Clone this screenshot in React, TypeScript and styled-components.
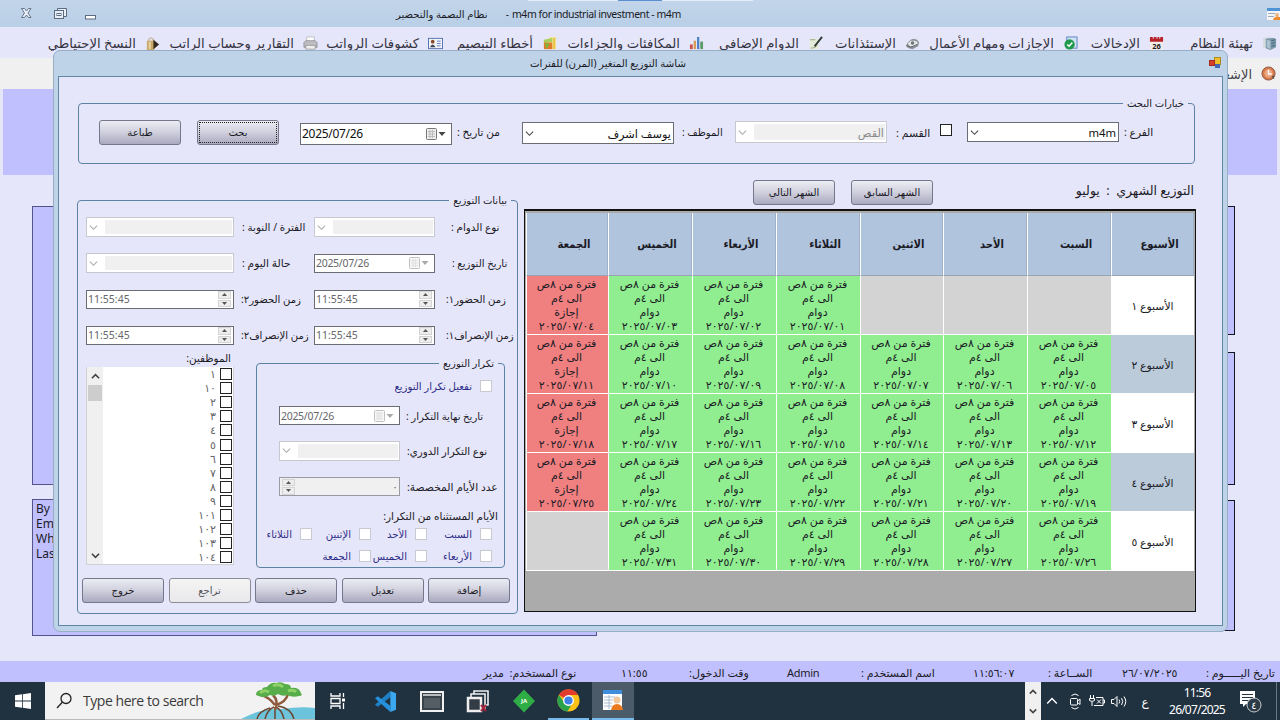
import React, { useState } from "react";
import styled, { createGlobalStyle } from "styled-components";

const GlobalStyle = createGlobalStyle`
  * {
    box-sizing: border-box;
  }
  body {
    margin: 0;
    overflow: hidden;
    font-family: "Noto Sans", "DejaVu Sans", sans-serif;
    color: #1b1b26;
  }
`;

const Desktop = styled.div`
  position: relative;
  width: 1280px;
  height: 720px;
  overflow: hidden;
  display: flex;
  flex-direction: column;
  background: #e6e6fa;
`;

const TitleBar = styled.header`
  height: 27px;
  flex: none;
  display: flex;
  align-items: center;
  background: linear-gradient(#c2d5ea, #b9cfe6);
  font-size: 10px;
`;

const WindowButtons = styled.div`
  width: 396px;
  padding-left: 20px;
  display: flex;
  align-items: center;
`;

const AppTitle = styled.div`
  width: 116px;
  display: flex;
  justify-content: space-between;
  padding-right: 3px;
  white-space: nowrap;
`;

const CompanyName = styled.div`
  flex: 1;
  font-size: 10.5px;
  letter-spacing: -0.45px;
  white-space: nowrap;
`;

const TopStrip = styled.div`
  position: absolute;
  top: 0;
  left: 528px;
  width: 225px;
  height: 1px;
  background: linear-gradient(
    90deg,
    #e4ecf5 0 90px,
    #5a90d0 90px 134px,
    #e4ecf5 134px
  );
`;

const MenuBar = styled.nav`
  height: 31px;
  flex: none;
  display: flex;
  direction: rtl;
  padding: 2px 3px 0 0;
  background: #e6e6fa;
`;

const MenuItem = styled.div<{ $width: number }>`
  width: ${(p) => p.$width}px;
  height: 28px;
  flex: none;
  display: flex;
  align-items: center;
  gap: 9px;
  font-size: 13.2px;
  color: #33333f;
  white-space: nowrap;
  svg {
    flex: none;
  }
`;

const ToolBar = styled.div`
  height: 31px;
  flex: none;
  display: flex;
  align-items: center;
  direction: rtl;
  gap: 9px;
  padding: 0 4px 0;
  font-size: 13px;
  color: #44444c;
  background: #f0f0f0;
`;

const Workspace = styled.main`
  flex: 1;
  padding: 0 3px;
`;

const Banner = styled.div`
  height: 86px;
  background: #c0c0ff;
`;

const Columns = styled.div`
  display: flex;
  justify-content: space-between;
  padding: 31px 42px 0 29px;
`;

const Column = styled.div`
  width: 565px;
  display: flex;
  flex-direction: column;
`;

const Panel = styled.div<{ $height: number; $gap?: number; $dark?: boolean }>`
  height: ${(p) => p.$height}px;
  margin-bottom: ${(p) => p.$gap || 0}px;
  padding: 1px 3px;
  border: 1px solid ${(p) => (p.$dark ? "#15151f" : "#54548a")};
  background: #c0c0ff;
  font-size: 12px;
  line-height: 15px;
`;

const StatusBar = styled.footer`
  height: 21px;
  flex: none;
  display: flex;
  align-items: center;
  padding: 2px 0 0 483px;
  background: #c0c0ff;
  white-space: nowrap;
`;

const StatusLabel = styled.div<{ $width: number }>`
  width: ${(p) => p.$width}px;
  flex: none;
  direction: rtl;
  text-align: left;
  font-size: 11px;
`;

const StatusValue = styled.div<{ $width: number; $spacing?: number }>`
  width: ${(p) => p.$width}px;
  flex: none;
  font-size: 11px;
  letter-spacing: ${(p) => p.$spacing || -0.3}px;
`;

/* ---------- dialog ---------- */

const Dialog = styled.section`
  position: absolute;
  left: 53px;
  top: 50px;
  width: 1175px;
  height: 582px;
  display: flex;
  flex-direction: column;
  padding: 0 4px 5px;
  border: 1px solid #98adc6;
  border-radius: 7px;
  background: #bed3e8;
`;

const DialogTitle = styled.div`
  height: 25px;
  flex: none;
  display: flex;
  align-items: center;
  justify-content: space-between;
  padding: 0 2px 1px 472px;
  font-size: 10.2px;
`;

const DialogBody = styled.div`
  flex: 1;
  padding: 20px 0 0 19px;
  border: 1px solid #5f87a6;
  background: #e6e6fa;
`;

const Group = styled.fieldset<{ $width: number; $height: number }>`
  width: ${(p) => p.$width}px;
  height: ${(p) => p.$height}px;
  min-width: 0;
  flex: none;
  margin: 0;
  padding: 0;
  border: 1px solid #5b83a3;
  border-radius: 4px;
  direction: rtl;
`;

const Legend = styled.legend`
  height: 13px;
  margin-right: 6px;
  padding: 0 4px;
  font-size: 10px;
  line-height: 13px;
`;

const SearchRow = styled.div`
  height: 44px;
  display: flex;
  align-items: center;
  padding-left: 20px;
  direction: ltr;
`;

const Button = styled.button<{ $focused?: boolean }>`
  width: 82px;
  height: 25px;
  flex: none;
  padding: 0 0 1px;
  border: 1px solid #77778c;
  border-radius: 3px;
  outline: ${(p) => (p.$focused ? "1px dotted #222" : "none")};
  outline-offset: -3px;
  background: linear-gradient(#ececf4, #d3d3e0 45%, #aaa9c0);
  font-family: inherit;
  font-size: 10px;
  color: #1b1b26;
  &:disabled {
    background: linear-gradient(#f4f4f4, #e9e9ec);
    border-color: #8c8c94;
    color: #55555c;
  }
`;

const Label = styled.span<{ $width?: number; $indent?: number; $size?: number }>`
  width: ${(p) => (p.$width ? `${p.$width}px` : "auto")};
  flex: none;
  padding-left: ${(p) => p.$indent || 0}px;
  direction: rtl;
  text-align: left;
  font-size: ${(p) => p.$size || 10.1}px;
  white-space: nowrap;
`;

const Gap = styled.span<{ $width: number }>`
  width: ${(p) => p.$width}px;
  flex: none;
`;

const Box = styled.div<{
  $width: number;
  $height?: number;
  $top?: number;
  $disabled?: boolean;
}>`
  width: ${(p) => p.$width}px;
  height: ${(p) => p.$height || 20}px;
  flex: none;
  margin-top: ${(p) => p.$top || 0}px;
  display: flex;
  align-items: center;
  border: 1px solid #6c6c74;
  background: #fff;
  font-size: ${(p) => (p.$disabled ? 10.5 : 12)}px;
  color: ${(p) => (p.$disabled ? "#66666c" : "#111")};
`;

const ComboBox = styled(Box)`
  padding: 1px;
  border-color: ${(p) => (p.$disabled ? "#c8c8d0" : "#6c6c74")};
  svg {
    flex: none;
    margin: 0 ${(p) => (p.$disabled ? 7 : 4)}px 0 1px;
  }
`;

const ComboValue = styled.div<{ $disabled?: boolean }>`
  flex: 1;
  margin: 1px 0;
  padding-right: 1px;
  display: flex;
  align-items: center;
  align-self: stretch;
  direction: rtl;
  background: ${(p) => (p.$disabled ? "#f0f0f0" : "#fff")};
  font-size: 11.3px;
  color: ${(p) => (p.$disabled ? "#8a8a8a" : "#111")};
`;

const BoxText = styled.span<{ $spacing?: number }>`
  flex: 1;
  padding-left: 1px;
  letter-spacing: ${(p) => p.$spacing || 0}px;
`;

const SpinButtons = styled.div`
  width: 13px;
  height: 16px;
  margin: 0 2px;
  display: flex;
  flex-direction: column;
  gap: 1px;
`;

const SpinButton = styled.div`
  flex: 1;
  display: flex;
  align-items: center;
  justify-content: center;
  border: 1px solid #d4d4d4;
  background: #ededed;
`;

const Check = styled.span<{ $disabled?: boolean; $raised?: boolean }>`
  width: 12px;
  height: 12px;
  flex: none;
  margin-bottom: ${(p) => (p.$raised ? 4 : 0)}px;
  border: 1px solid ${(p) => (p.$disabled ? "#c9c9d2" : "#222")};
  background: #fff;
`;

const Content = styled.div`
  display: flex;
  align-items: flex-start;
  gap: 6px;
  margin-left: -1px;
`;

const Distribution = styled.div`
  padding-top: 30px;
`;

const Fields = styled.div`
  display: grid;
  grid-template-columns: 148px 80px 121px 80px;
  grid-auto-rows: 36px;
  align-items: center;
  padding: 2px 0 1px 8px;
  direction: ltr;
`;

const Lower = styled.div`
  display: flex;
  justify-content: space-between;
  padding: 0 12px 0 8px;
  height: 219px;
  direction: ltr;
`;

const Employees = styled.div`
  width: 148px;
`;

const EmployeesTitle = styled.div`
  height: 13px;
  padding-right: 3px;
  direction: rtl;
  font-size: 10.4px;
  line-height: 8px;
`;

const ListBox = styled.div`
  height: 198px;
  display: flex;
  border: 1px solid #cfcfd6;
  border-top: none;
  background: #fff;
`;

const ScrollBar = styled.div`
  width: 16px;
  display: flex;
  flex-direction: column;
  align-items: center;
  justify-content: space-between;
  padding: 5px 0 4px;
  background: #f0f0f0;
`;

const ScrollThumb = styled.div`
  width: 14px;
  height: 16px;
  margin: 4px 0 auto;
  background: #cdcdcd;
`;

const List = styled.ul`
  flex: 1;
  margin: 0;
  padding: 0 1px 0 0;
  list-style: none;
  direction: rtl;
`;

const ListItem = styled.li`
  height: 14.1px;
  display: flex;
  align-items: center;
  gap: 4px;
  font-size: 11px;
  line-height: 14px;
  color: #66666c;
`;

const RepeatBox = styled.div`
  padding-top: 3px;
`;

const RepeatRow = styled.div<{ $height: number }>`
  height: ${(p) => p.$height}px;
  display: flex;
  align-items: center;
  gap: 6px;
  padding-left: 22px;
  direction: ltr;
`;

const CheckRow = styled.label<{ $height?: number }>`
  height: ${(p) => p.$height || 15}px;
  display: flex;
  align-items: center;
  gap: 8px;
  font-size: 10.1px;
  color: #2b2b86;
  white-space: nowrap;
`;

const Days = styled.div`
  display: grid;
  grid-template-columns: 65px 56px 59px 56px;
  row-gap: 7px;
`;

const RepeatContent = styled.div`
  padding-right: 12px;
`;

const DaysTitle = styled.div`
  height: 25px;
  margin-right: -6px;
  padding-top: 8px;
  font-size: 10.5px;
  line-height: 15px;
`;

const Counter = styled(Box)`
  justify-content: space-between;
  padding-right: 1px;
  background: #f0f0f0;
  border-color: #9a9aa2;
`;

const Actions = styled.div`
  display: flex;
  justify-content: space-between;
  padding: 5px 7px 0 4px;
  direction: ltr;
`;

const Schedule = styled.div`
  width: 672px;
`;

const MonthBar = styled.div`
  height: 45px;
  display: flex;
  align-items: center;
  direction: rtl;
  padding: 12px 2px 0 0;
`;

const MonthTitle = styled.div`
  width: 261px;
  margin-bottom: 4px;
  font-size: 12.5px;
  white-space: pre;
`;

const MonthButtons = styled.div`
  display: flex;
  gap: 16px;
`;

const Calendar = styled.div`
  height: 403px;
  padding: 2px 1px 0 1px;
  border: 1px solid #111;
  border-top-width: 2px;
  background: #ababab;
`;

const CalendarRow = styled.div`
  display: grid;
  direction: rtl;
  grid-template-columns: 83px 84px 84px 83px 84px 84px 84px 82px;
`;

const HeadCell = styled.div`
  height: 63px;
  display: flex;
  align-items: center;
  justify-content: center;
  text-indent: -14px;
  border-left: 1px solid #fff;
  border-right: 1px solid #9fb1c8;
  border-bottom: 1px solid #98a4b4;
  background: #b0c4de;
  font-family: "DejaVu Sans Condensed", "DejaVu Sans", sans-serif;
  font-size: 11.2px;
  font-weight: bold;
`;

const WeekCell = styled.div<{ $alt: boolean }>`
  height: 59px;
  display: flex;
  align-items: center;
  justify-content: center;
  border-bottom: 1px solid #fff;
  background: ${(p) => (p.$alt ? "#bccbda" : "#fff")};
  font-size: 10.8px;
`;

const shiftColors = {
  work: "#90ee90",
  off: "#f08080",
  none: "#d3d3d3",
};

const DayCell = styled.div<{ $kind: keyof typeof shiftColors }>`
  height: 59px;
  padding: 1px 2px 0 0;
  border-left: 1px solid #fff;
  border-bottom: 1px solid #fff;
  background: ${(p) => shiftColors[p.$kind]};
  font-size: 11px;
  line-height: 14px;
  text-align: center;
  white-space: nowrap;
  overflow: hidden;
`;

const CellDate = styled.span`
  letter-spacing: -0.35px;
`;

/* ---------- taskbar ---------- */

const TaskBar = styled.div`
  height: 38px;
  flex: none;
  display: flex;
  background: #203140;
  color: #fff;
`;

const TaskCell = styled.div<{ $width: number; $active?: boolean; $open?: boolean }>`
  width: ${(p) => p.$width}px;
  flex: none;
  display: flex;
  align-items: center;
  justify-content: center;
  background: ${(p) => (p.$active ? "#4b5b69" : "transparent")};
  border-bottom: ${(p) => (p.$open ? "2px solid #76b9ed" : "none")};
  font-size: 12px;
`;

const SearchBox = styled.div`
  width: 270px;
  flex: none;
  display: flex;
  align-items: center;
  gap: 10px;
  padding-left: 11px;
  border-bottom: 1px solid #b9b9b9;
  background: #f2f2f2;
  color: #3a3a3a;
  font-family: "Open Sans", sans-serif;
  font-size: 14px;
  letter-spacing: -0.45px;
  white-space: nowrap;
`;

const SearchText = styled.span`
  width: 136px;
`;

const Spacer = styled.div`
  flex: 1;
`;

const MiniScroll = styled.div`
  width: 16px;
  display: flex;
  flex-direction: column;
  align-items: center;
  justify-content: space-between;
  padding: 6px 0 5px;
  background: #f0f0f0;
`;

const Clock = styled.div`
  width: 76px;
  margin-right: 4px;
  padding-top: 2px;
  text-align: center;
  font-size: 12px;
  line-height: 17px;
  letter-spacing: -0.8px;
`;

const ShowDesktop = styled.div`
  width: 4px;
  border-left: 1px solid #6a7681;
`;

const Chevron = ({ color = "#444", up = false, size = 9, width = 1.2 }) => (
  <svg width={size} height={size} viewBox="0 0 10 10" fill="none">
    <path
      d={up ? "M1 7l4-4 4 4" : "M1 3l4 4 4-4"}
      stroke={color}
      strokeWidth={width}
    />
  </svg>
);

const DateIcon = ({ disabled = false }) => (
  <svg width="22" height="14" viewBox="0 0 22 14" opacity={disabled ? 0.45 : 1}>
    <rect x="1.5" y="1.5" width="10" height="11" rx="1" fill="#eee" stroke="#777" />
    <path d="M3 4.5h7M3 7h7M3 9.5h7M5 3v8M7.5 3v8" stroke="#bbb" />
    <path d="M13.5 5h7L17 9z" fill="#444" />
  </svg>
);

const Spinner = () => (
  <SpinButtons>
    <SpinButton>
      <svg width="5" height="3">
        <path d="M0 3L2.5 0 5 3z" fill="#555" />
      </svg>
    </SpinButton>
    <SpinButton>
      <svg width="5" height="3">
        <path d="M0 0L2.5 3 5 0z" fill="#555" />
      </svg>
    </SpinButton>
  </SpinButtons>
);

const Combo = ({ width, height, top, value, disabled }: any) => (
  <ComboBox $width={width} $height={height} $top={top} $disabled={disabled}>
    <Chevron color={disabled ? "#aaa" : "#444"} />
    <ComboValue $disabled={disabled}>{value}</ComboValue>
  </ComboBox>
);

const DatePicker = ({ width, height, top, disabled }: any) => (
  <Box $width={width} $height={height} $top={top} $disabled={disabled}>
    <BoxText $spacing={-0.3}>2025/07/26</BoxText>
    <DateIcon disabled={disabled} />
    <Gap $width={4} />
  </Box>
);

const TimePicker = ({ width }: any) => (
  <Box $width={width} $height={19} $disabled>
    <BoxText>11:55:45</BoxText>
    <Spinner />
  </Box>
);

const icons = {
  server: (
    <>
      <path d="M1 2l7-1 4 1v10l-4 3-7-3z" fill="#d5dbe0" />
      <path d="M4 3l8-1 3 1v9l-6 3-5-2z" fill="#7b97a8" />
      <path d="M5 4l4 1v9l-4-2z" fill="#a9c4d0" />
      <path d="M10 5l4-1M10 8l4-1M10 11l4-1" stroke="#3f6478" />
    </>
  ),
  calendar: (
    <>
      <rect x="1" y="5" width="14" height="10" fill="#f2ece8" />
      <path d="M1 1h3v2h1V1h3v2h1V1h2v2h1V1h3v5H1z" fill="#b8232b" />
      <text x="8" y="14" fontSize="8" fontWeight="bold" textAnchor="middle" fill="#222">
        26
      </text>
    </>
  ),
  approved: (
    <>
      <rect x="4" y="1" width="11" height="12" fill="#cfe0f4" stroke="#5b83c0" />
      <circle cx="7" cy="9" r="5.5" fill="#1f9a4c" />
      <path d="M4.5 9l2 2 3.500-4" stroke="#fff" strokeWidth="1.5" fill="none" />
    </>
  ),
  printer: (
    <>
      <path d="M4 1h8v5H4z" fill="#fff" stroke="#aaa" strokeWidth=".7" />
      <path d="M1 7l2-2h10l2 2v5H1z" fill="#bdbdc2" stroke="#77777d" strokeWidth=".7" />
      <path d="M3 10h10v4H3z" fill="#eee" stroke="#888" strokeWidth=".7" />
    </>
  ),
  gear: (
    <>
      <path d="M1 10l2-3 3-3 3-1 4 1 2 3-1 4-4 2-2 1-4-1-2-1z" fill="#8f9498" />
      <path d="M3 8l3-3h4l3 1 .5 2-2 2-3 1H5z" fill="#e4e6e7" />
      <path d="M2 10l4 2 7-3" stroke="#5c6166" fill="none" />
      <circle cx="8" cy="7.500" r="1.800" fill="#6c7175" />
    </>
  ),
  note: (
    <>
      <path d="M2 3h9v11H2z" fill="#e6ead8" />
      <path d="M3 13q5 0 7-3M2 4h6" stroke="#9aa77c" fill="none" />
      <path d="M15 1L7 11" stroke="#2d3b34" strokeWidth="2" />
    </>
  ),
  bars: (
    <>
      <path d="M1 9h3v5H1z" fill="#c9534a" />
      <path d="M5 5h2.500v9H5z" fill="#d69a55" />
      <path d="M8.500 1H11v13H8.500z" fill="#4f83c4" />
      <path d="M12 6h3v8h-3z" fill="#5a9b66" />
    </>
  ),
  report: (
    <>
      <path d="M8 1h7v13H8z" fill="#f4e3a0" />
      <path d="M2 4l9-2v4l-9 2z" fill="#a9cf5a" />
      <path d="M2 7h9v7H2z" fill="#e07b2b" />
      <path d="M3 8l5 0-3 6z" fill="#7db63c" />
      <path d="M12 2h2v12h-2z" fill="#e9c23e" />
    </>
  ),
  card: (
    <>
      <rect x=".5" y="2.500" width="15" height="11" fill="#f2f4fa" stroke="#4f6fae" />
      <circle cx="5" cy="6" r="2" fill="#8a4a2a" />
      <path d="M2 12q3-6 6 0z" fill="#3e4656" />
      <path d="M9.500 5.500h4M9.500 8h4M9.500 10.500h4" stroke="#5b78b8" />
    </>
  ),
  lock: (
    <>
      <path d="M4 7V4q2-4 5 0v3" stroke="#c3bba6" strokeWidth="1.500" fill="none" />
      <rect x="2" y="5" width="8" height="10" fill="#c9a86a" />
      <path d="M4 6h2v8H4z" fill="#e8d5a4" />
      <path d="M9 4l6 5-6 5z" fill="#33261c" />
    </>
  ),
  clock: (
    <>
      <circle cx="8" cy="8" r="7" fill="#d9784a" stroke="#8a5a44" />
      <circle cx="8" cy="8" r="4.500" fill="#eba680" />
      <path d="M8 4v4.500h3.500" stroke="#fff" strokeWidth="1.500" fill="none" />
      <path d="M11 11l3-1v4z" fill="#5b5048" />
    </>
  ),
};

const Icon = ({ name }: { name: keyof typeof icons }) => (
  <svg width="15" height="15" viewBox="0 0 16 16">
    {icons[name]}
  </svg>
);

const menu: { icon: keyof typeof icons; text: string; width: number }[] = [
  { icon: "server", text: "تهيئة النظام", width: 113 },
  { icon: "calendar", text: "الإدخالات", width: 86 },
  { icon: "approved", text: "الإجازات ومهام الأعمال", width: 158 },
  { icon: "gear", text: "الإستئذانات", width: 97 },
  { icon: "note", text: "الدوام الإضافي", width: 119 },
  { icon: "bars", text: "المكافئات والجزاءات", width: 147 },
  { icon: "report", text: "أخطاء التبصيم", width: 114 },
  { icon: "card", text: "كشوفات الرواتب", width: 125 },
  { icon: "printer", text: "التقارير وحساب الراتب", width: 158 },
  { icon: "lock", text: "النسخ الإحتياطي", width: 120 },
];

const toArabic = (n: number | string) =>
  String(n).replace(/\d/g, (d) => "٠١٢٣٤٥٦٧٨٩"[Number(d)]);

const dayNames = [
  "السبت",
  "الأحد",
  "الاثنين",
  "الثلاثاء",
  "الأربعاء",
  "الخميس",
  "الجمعة",
];

const repeatDays = [
  "السبت",
  "الأحد",
  "الإثنين",
  "الثلاثاء",
  "الأربعاء",
  "الخميس",
  "الجمعة",
];

const employees = [1, 10, 2, 3, 4, 5, 6, 7, 8, 9, 101, 102, 103, 104];

// the month starts on a Tuesday, the fourth column of the week
const FIRST_COLUMN = 3;
const DAYS_IN_MONTH = 31;

function MonthCalendar() {
  return (
    <Calendar>
      <CalendarRow>
        <HeadCell>الأسبوع</HeadCell>
        {dayNames.map((name) => (
          <HeadCell key={name}>{name}</HeadCell>
        ))}
      </CalendarRow>
      {[0, 1, 2, 3, 4].map((week) => (
        <CalendarRow key={week}>
          <WeekCell $alt={week % 2 === 1}>الأسبوع {toArabic(week + 1)}</WeekCell>
          {dayNames.map((name, index) => {
            const day = week * 7 + index - FIRST_COLUMN + 1;
            if (day < 1 || day > DAYS_IN_MONTH) {
              return <DayCell key={name} $kind="none" />;
            }
            const off = index === 6;
            return (
              <DayCell key={name} $kind={off ? "off" : "work"}>
                فترة من ٨ص
                <br />
                الى ٤م
                <br />
                {off ? "إجازة" : "دوام"}
                <br />
                <CellDate>
                  {toArabic(`2025/07/${String(day).padStart(2, "0")}`)}
                </CellDate>
              </DayCell>
            );
          })}
        </CalendarRow>
      ))}
    </Calendar>
  );
}

function SearchOptions() {
  return (
    <Group $width={1117} $height={67}>
      <Legend>خيارات البحث</Legend>
      <SearchRow>
        <Button>طباعة</Button>
        <Gap $width={16} />
        <Button $focused>بحث</Button>
        <Gap $width={21} />
        <DatePicker width={152} height={22} top={3} />
        <Label $width={70} $indent={5} $size={10.5}>
          من تاريخ :
        </Label>
        <Combo width={152} height={22} top={2} value="يوسف اشرف" />
        <Label $width={61} $indent={8}>
          الموظف :
        </Label>
        <Combo width={152} height={22} value="القص" disabled />
        <Label $width={53} $indent={9} $size={10.8}>
          القسم :
        </Label>
        <Check $raised />
        <Gap $width={15} />
        <Combo width={152} height={20} value="m4m" />
        <Label $indent={5} $size={10.6}>
          الفرع :
        </Label>
      </SearchRow>
    </Group>
  );
}

function RepeatOptions() {
  return (
    <Group $width={249} $height={211}>
      <Legend>تكرار التوزيع</Legend>
      <RepeatContent>
        <CheckRow $height={32}>
          <Check $disabled />
          تفعيل تكرار التوزيع
        </CheckRow>
      </RepeatContent>
      <RepeatRow $height={27}>
        <DatePicker width={121} height={19} disabled />
        <Label>تاريخ نهاية التكرار :</Label>
      </RepeatRow>
      <RepeatRow $height={43}>
        <Combo width={121} height={20} disabled />
        <Label $indent={1} $size={10.3}>
          نوع التكرار الدوري:
        </Label>
      </RepeatRow>
      <RepeatRow $height={29}>
        <Counter $width={121} $height={19} $disabled>
          <Spinner />
          <span>٠</span>
        </Counter>
        <Label $indent={1} $size={10.7}>
          عدد الأيام المخصصة:
        </Label>
      </RepeatRow>
      <RepeatContent>
        <DaysTitle>الأيام المستثناه من التكرار:</DaysTitle>
        <Days>
          {repeatDays.map((name) => (
            <CheckRow key={name}>
              <Check $disabled />
              {name}
            </CheckRow>
          ))}
        </Days>
      </RepeatContent>
    </Group>
  );
}

function DistributionData() {
  return (
    <Distribution>
      <Group $width={441} $height={420}>
        <Legend>بيانات التوزيع</Legend>
        <Fields>
          <Combo width={148} disabled />
          <Label $indent={8} $size={10.4}>
            الفترة / النوبة :
          </Label>
          <Combo width={121} disabled />
          <Label $indent={16} $size={10.4}>
            نوع الدوام :
          </Label>

          <Combo width={148} disabled />
          <Label $indent={8} $size={10.6}>
            حالة اليوم :
          </Label>
          <DatePicker width={121} height={19} disabled />
          <Label $indent={17}>تاريخ التوزيع :</Label>

          <TimePicker width={148} />
          <Label $indent={7}>زمن الحضور٢:</Label>
          <TimePicker width={121} />
          <Label $indent={11}>زمن الحضور١:</Label>

          <TimePicker width={148} />
          <Label $indent={7}>زمن الإنصراف٢:</Label>
          <TimePicker width={121} />
          <Label $indent={11}>زمن الإنصراف١:</Label>
        </Fields>
        <Lower>
          <Employees>
            <EmployeesTitle>الموظفين:</EmployeesTitle>
            <ListBox>
              <ScrollBar>
                <Chevron up width={1.8} />
                <ScrollThumb />
                <Chevron width={1.8} />
              </ScrollBar>
              <List>
                {employees.map((id) => (
                  <ListItem key={id}>
                    <Check />
                    {toArabic(id)}
                  </ListItem>
                ))}
              </List>
            </ListBox>
          </Employees>
          <RepeatBox>
            <RepeatOptions />
          </RepeatBox>
        </Lower>
        <Actions>
          <Button>خروج</Button>
          <Button disabled>تراجع</Button>
          <Button>حذف</Button>
          <Button>تعديل</Button>
          <Button>إضافة</Button>
        </Actions>
      </Group>
    </Distribution>
  );
}

function WindowsTaskBar() {
  return (
    <TaskBar>
      <TaskCell $width={45}>
        <svg width="16" height="16" viewBox="0 0 16 16" fill="#fff">
          <path d="M0 2.300l7-1v6.300H0zM7.800 1.200L16 0v7.600H7.800zM0 8.400h7v6.300l-7-1zM7.800 8.400H16V16l-8.200-1.200z" />
        </svg>
      </TaskCell>
      <SearchBox>
        <svg width="17" height="17" viewBox="0 0 17 17" fill="none" stroke="#222" strokeWidth="1.300">
          <circle cx="10" cy="6.500" r="5" />
          <path d="M6.500 10L1 16" />
        </svg>
        <SearchText>Type here to search</SearchText>
        <svg width="86" height="37" viewBox="0 0 86 37">
          <path d="M12 37q20-11 40-10 20-3 34-1v11z" fill="#6cc3dc" />
          <path d="M28 37q2-8 13-11M36 37q2-9 9-12M46 37V25M55 37q-2-9-8-12M65 37q-3-11-16-13" stroke="#6b4630" strokeWidth="1.500" fill="none" />
          <path d="M46 28q4-9-2-15M47 23q10-3 12-11M46 23q-6-8-14-10" stroke="#8d5a3c" strokeWidth="2.500" fill="none" />
          <path d="M27 13q0-5 6-5 0-3 5-3 4-5 9-4 5-2 9 1 6 0 6 4 8-1 10 5 2 3-2 3-6 2-12-1-4 2-9-1-4 3-8 1-6 4-14 0z" fill="#56ad49" />
          <path d="M31 11q4-4 9-1M44 4q6-3 10 1M59 9q5-2 8 1" stroke="#8fd067" strokeWidth="3" fill="none" />
        </svg>
      </SearchBox>
      <TaskCell $width={45}>
        <svg width="16" height="16" viewBox="0 0 16 16" stroke="#fff" fill="none" strokeWidth="1.300">
          <path d="M1 0v3h9V0M1 16v-3h9v3M1 5.500h9v5H1zM13.500 0v4M13.500 10v6" />
          <path d="M12 7h3" strokeWidth="3" />
        </svg>
      </TaskCell>
      <TaskCell $width={51}>
        <svg width="23" height="23" viewBox="0 0 24 24">
          <path d="M17 1v6.500L4 17.500 1 15.500z" fill="#1f7fc4" />
          <path d="M1 8.500l3-2 13 10V23z" fill="#2590dc" />
          <path d="M17 1l6 2.500v17L17 23z" fill="#3aa7ee" />
        </svg>
      </TaskCell>
      <TaskCell $width={41}>
        <svg width="24" height="21" viewBox="0 0 24 21">
          <rect x="1" y="1" width="22" height="19" fill="#39434b" stroke="#f0f0f0" strokeWidth="2" />
          <path d="M3 4h18" stroke="#b9bdc0" strokeWidth="2" />
          <path d="M4 7h16v10H4z" fill="#555e65" />
        </svg>
      </TaskCell>
      <TaskCell $width={51}>
        <svg width="23" height="23" viewBox="0 0 23 23" fill="none" stroke="#eee" strokeWidth="1.600">
          <path d="M8 4V1h14v14h-3" />
          <path d="M5 7V4h14v14h-3" />
          <path d="M2 8h13v13H2z" fill="#333c44" strokeWidth="2.500" />
          <path d="M15 15l5 6M20 15l-5 6" stroke="#a3263c" strokeWidth="2" />
        </svg>
      </TaskCell>
      <TaskCell $width={41}>
        <svg width="24" height="24" viewBox="0 0 24 24">
          <path d="M12 .5L23 12 12 23.500 1 12z" fill="#2fae46" />
          <text x="12" y="14" fontSize="6" fontWeight="bold" textAnchor="middle" fill="#fff">
            JA
          </text>
        </svg>
      </TaskCell>
      <Gap $width={4} />
      <TaskCell $width={41} $open>
        <svg width="23" height="23" viewBox="0 0 24 24">
          <circle cx="12" cy="12" r="11.500" fill="#fbc116" />
          <path d="M12 12L2 6.200A11.500 11.500 0 0 1 22 6.200H12z" fill="#e33b2e" />
          <path d="M2 6.200A11.500 11.500 0 0 0 11 23.500L16 14.500 8 14.500z" fill="#2ba24c" />
          <circle cx="12" cy="12" r="5.700" fill="#fff" />
          <circle cx="12" cy="12" r="4.300" fill="#3f7fe8" />
        </svg>
      </TaskCell>
      <Gap $width={3} />
      <TaskCell $width={42} $active $open>
        <svg width="22" height="22" viewBox="0 0 22 22">
          <path d="M1 1h19v20H1z" fill="#fff" />
          <path d="M1 1h19v4H1z" fill="#3e8edb" />
          <path d="M2 8h11M2 11h9M2 14h8M2 17h8M7 6v14" stroke="#a9bccd" />
          <circle cx="15" cy="11" r="3.500" fill="#f2c79c" />
          <path d="M9 21q1-6 6-6t6 6z" fill="#ec7a1c" />
        </svg>
      </TaskCell>
      <Spacer />
      <MiniScroll>
        <Chevron up size={8} width={2} />
        <Chevron size={8} width={2} />
      </MiniScroll>
      <TaskCell $width={22}>
        <Chevron up color="#fff" size={12} />
      </TaskCell>
      <TaskCell $width={23}>
        <svg width="12" height="17" viewBox="0 0 12 17" fill="none" stroke="#fff">
          <path d="M2.500 2.500q3.500-3 7 0M2.500 14.500q3.500 3 7 0" />
          <rect x="1.500" y="5.500" width="7" height="6.500" rx="1" />
          <path d="M8.500 8l2.500-2v5.500l-2.500-2" />
        </svg>
      </TaskCell>
      <TaskCell $width={21}>
        <svg width="16" height="12" viewBox="0 0 16 12" fill="none" stroke="#fff">
          <path d="M1.500 0v3M4.500 0v3M.5 3.500h5v2q-2.500 2-5 0zM3 7v4" />
          <path d="M7 2.500h7v8H5M14 5h1.500v3H14M8 4.500l4 4M12 4.500l-4 4" />
        </svg>
      </TaskCell>
      <TaskCell $width={24}>
        <svg width="17" height="13" viewBox="0 0 17 13" fill="none" stroke="#fff">
          <path d="M.5 4.500h2.500l3-3v10l-3-3H.5zM8 4.500q1.500 2 0 4M10.500 3q2.500 3.500 0 7M13 1.500q3.500 5 0 10" />
        </svg>
      </TaskCell>
      <TaskCell $width={28}>ع</TaskCell>
      <Clock>
        11:56
        <br />
        26/07/2025
      </Clock>
      <TaskCell $width={23}>
        <svg width="23" height="23" viewBox="0 0 23 23">
          <path d="M1 1h15v13H7l-3 3v-3H1z" fill="#fff" />
          <path d="M3 4.500h11M3 7.500h11M3 10.500h8" stroke="#203140" />
          <circle cx="15" cy="15" r="7" fill="#2b3b48" stroke="#ccc" />
          <text x="15" y="18.500" fontSize="10" textAnchor="middle" fill="#fff">
            ٤
          </text>
        </svg>
      </TaskCell>
      <Gap $width={14} />
      <ShowDesktop />
    </TaskBar>
  );
}

export default function App() {
  const [month] = useState("يوليو");

  return (
    <Desktop>
      <GlobalStyle />
      <TitleBar>
        <WindowButtons>
          <svg width="78" height="13" viewBox="0 0 78 13" fill="none" stroke="#5c6b80">
            <path
              d="M1.500 1.500h3l2 2.500 2-2.500h2.500L8 6l3 4.500H8.500l-2-2.500-2 2.500h-3L4.500 6z"
              fill="#e9eff6"
              strokeWidth=".9"
            />
            <path d="M37.500 3.500v-2h9v8h-3" fill="#e9eff6" />
            <rect x="34.500" y="3.500" width="9" height="8" fill="#e9eff6" />
            <rect x="37" y="6.500" width="4" height="2" />
            <rect x="65.500" y="8.500" width="10" height="3.500" fill="#fff" />
          </svg>
        </WindowButtons>
        <AppTitle>
          <span>نظام البصمة والتحضير</span>
          <span>-</span>
        </AppTitle>
        <CompanyName>m4m for industrial investment - m4m</CompanyName>
        <svg width="13" height="14" viewBox="0 0 13 14">
          <path d="M0 1h13v12H0z" fill="#f4f4f4" />
          <path d="M0 1h13v3H0z" fill="#4d93d6" />
          <path d="M1 6.500h7M1 9.500h6" stroke="#9ab" />
          <circle cx="10" cy="8" r="2" fill="#e7b58a" />
          <path d="M6 13q1-4 7-3v3z" fill="#ec8a2c" />
        </svg>
      </TitleBar>
      <TopStrip />
      <MenuBar>
        {menu.map((item) => (
          <MenuItem key={item.icon} $width={item.width}>
            <Icon name={item.icon} />
            {item.text}
          </MenuItem>
        ))}
      </MenuBar>
      <ToolBar>
        <Icon name="clock" />
        الإشعارات
      </ToolBar>
      <Workspace>
        <Banner />
        <Columns>
          <Column>
            <Panel $height={279} $gap={14} />
            <Panel $height={137}>
              By
              <br />
              Em
              <br />
              Wh
              <br />
              Las
            </Panel>
          </Column>
          <Column>
            <Panel $height={129} $gap={17} $dark />
            <Panel $height={133} $gap={15} $dark />
            <Panel $height={131} $dark />
          </Column>
        </Columns>
      </Workspace>
      <StatusBar>
        <StatusLabel $width={138}>نوع المستخدم:&nbsp; مدير</StatusLabel>
        <StatusValue $width={68} $spacing={-1.3}>
          ١١:٥٥
        </StatusValue>
        <StatusLabel $width={98}>وقت الدخول:</StatusLabel>
        <StatusValue $width={74}>Admin</StatusValue>
        <StatusLabel $width={112}>اسم المستخدم :</StatusLabel>
        <StatusValue $width={75} $spacing={-0.8}>
          ١١:٥٦:٠٧
        </StatusValue>
        <StatusLabel $width={74}>الســاعة :</StatusLabel>
        <StatusValue $width={84}>٢٦/٠٧/٢٠٢٥</StatusValue>
        <StatusLabel $width={74}>تاريخ اليـــــوم :</StatusLabel>
      </StatusBar>
      <WindowsTaskBar />

      <Dialog>
        <DialogTitle>
          <span dir="rtl">شاشة التوزيع المتغير (المرن) للفترات</span>
          <svg width="12" height="12" viewBox="0 0 12 12">
            <rect x="5.500" y=".5" width="6" height="7" fill="#f0c02c" stroke="#b08a20" />
            <rect x=".5" y="3.500" width="5" height="5" fill="#d8402c" stroke="#a02c20" />
            <rect x="6" y="7" width="5" height="4" fill="#4468b4" />
          </svg>
        </DialogTitle>
        <DialogBody>
          <SearchOptions />
          <Content>
            <DistributionData />
            <Schedule>
              <MonthBar>
                <MonthTitle>التوزيع الشهري  :  {month}</MonthTitle>
                <MonthButtons>
                  <Button>الشهر السابق</Button>
                  <Button>الشهر التالي</Button>
                </MonthButtons>
              </MonthBar>
              <MonthCalendar />
            </Schedule>
          </Content>
        </DialogBody>
      </Dialog>
    </Desktop>
  );
}
